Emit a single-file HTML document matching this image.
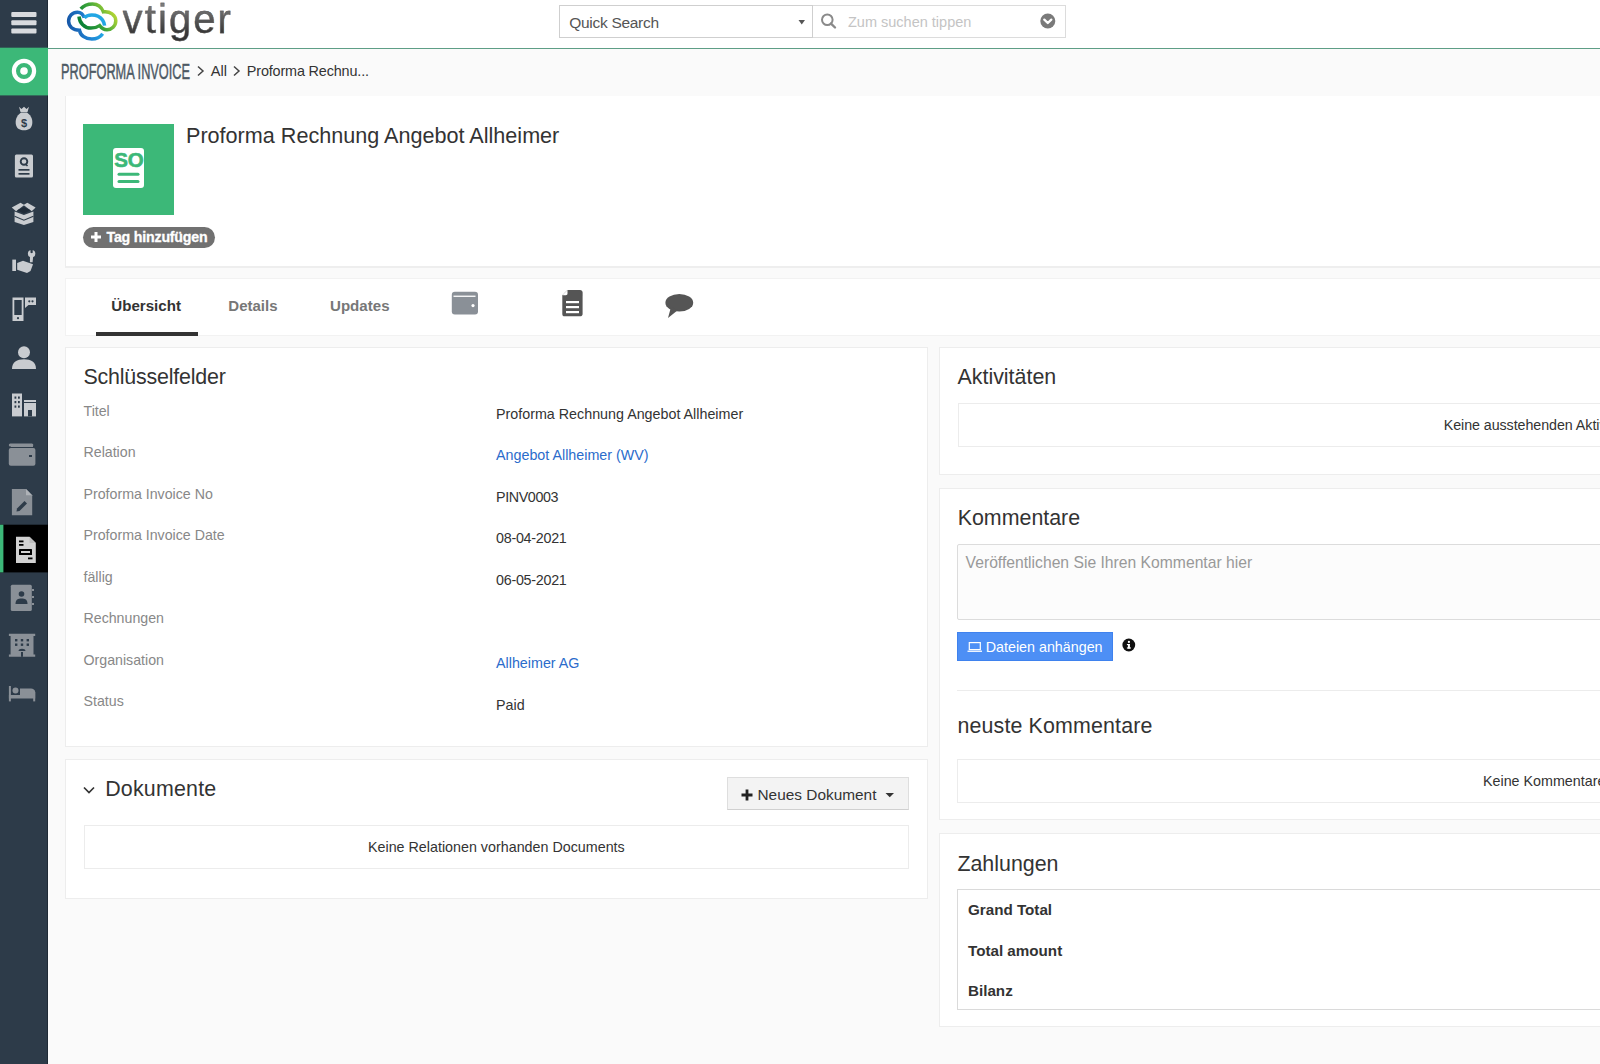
<!DOCTYPE html>
<html>
<head>
<meta charset="utf-8">
<style>
*{box-sizing:border-box;margin:0;padding:0}
html,body{width:1600px;height:1064px;overflow:hidden}
body{background:#fafafa;font-family:"Liberation Sans",sans-serif;color:#333;position:relative}
.abs{position:absolute}
#side{left:0;top:0;width:48px;height:1064px;background:#2d3b49;border-right:1px solid #1f2a36}
#hdr{left:48px;top:0;width:1552px;height:49px;background:#fff;border-bottom:1px solid #5e9e86}
#crumb{left:48px;top:49px;width:1552px;height:47px;background:#fafafa}
.card{position:absolute;background:#fff;border:1px solid #ededed}
.b{position:absolute;white-space:nowrap;line-height:1;transform:translateY(-84.67%)}
.lbl{color:#888;font-size:14.2px;left:83.5px}
.val{color:#333;font-size:14.3px;left:496px}
.lnk{color:#2b6ccb}
.h2{font-size:21.4px;color:#333}
</style>
</head>
<body>
<div id="side" class="abs">
<svg width="48" height="1064" viewBox="0 0 48 1064" style="position:absolute;left:0;top:0">
  <!-- hamburger -->
  <g fill="#d8dade">
    <rect x="11.3" y="12" width="25.2" height="5" rx="1"/>
    <rect x="11.3" y="20.3" width="25.2" height="5" rx="1"/>
    <rect x="11.3" y="28.4" width="25.2" height="5" rx="1"/>
  </g>
  <!-- green active home -->
  <rect x="0" y="47.7" width="48" height="47.7" fill="#3cb878"/>
  <circle cx="24" cy="71" r="10.1" fill="none" stroke="#fff" stroke-width="4.2"/>
  <circle cx="24" cy="71" r="3.8" fill="#fff"/>
  <!-- money bag -->
  <g fill="#c9ccd0">
    <path d="M19 106.7 L21.5 109 L24 106.7 L26.5 109 L29 106.7 L27.5 112 L20.5 112 Z"/>
    <path d="M21 112.5 L27 112.5 C32 116 33 121 32 125 C31 129 28 130.2 24 130.2 C20 130.2 17 129 16 125 C15 121 16 116 21 112.5 Z"/>
  </g>
  <text x="24" y="126.5" font-family="Liberation Sans" font-weight="bold" font-size="11" fill="#2d3b49" text-anchor="middle">$</text>
  <!-- quotes -->
  <rect x="14.9" y="154.6" width="18.1" height="23" rx="1.5" fill="#c9ccd0"/>
  <circle cx="24" cy="161.5" r="3.3" fill="none" stroke="#2d3b49" stroke-width="1.9"/>
  <path d="M25.5 164 L27.5 166" stroke="#2d3b49" stroke-width="1.6"/>
  <rect x="18.5" y="169" width="11" height="1.7" fill="#2d3b49"/>
  <rect x="18.5" y="173" width="11" height="1.7" fill="#2d3b49"/>
  <!-- box -->
  <g fill="#c9ccd0">
    <path d="M11.75 207.5 L20.5 202.8 L24.3 204.9 L16.1 211.2 Z"/>
    <path d="M35.6 207.5 L27.3 202.8 L23.5 204.9 L31.7 211.2 Z"/>
    <path d="M14.6 211.6 L23.9 215 L33.4 211.6 V222 L23.9 225.1 L14.6 222 Z"/>
  </g>
  <path d="M17 210.3 L23.9 207.3 L30.8 210.3 L23.9 213.6 Z" fill="#1f2b38"/>
  <path d="M14.6 216.3 L23.9 220.2 L33.4 216.3" fill="none" stroke="#2d3b49" stroke-width="1.2"/>
  <!-- hand with wrench -->
  <g fill="#c9ccd0">
    <rect x="12.3" y="259.6" width="3.7" height="11.4"/>
    <path d="M17.2 263 L23 260.8 L33 264.3 L30.5 271 L27 273 L17.2 269.7 Z"/>
    <circle cx="31.6" cy="253.6" r="3.7"/>
    <path d="M30 256 H33.2 L32.6 262.3 H29.9 Z"/>
  </g>
  <path d="M30.5 249.5 H32.7 V252.6 C32.7 253.3 30.5 253.3 30.5 252.6 Z" fill="#2d3b49"/>
  <!-- phone + chat -->
  <g fill="#c9ccd0">
    <path d="M12.5 297.5 H23.5 V321 H12.5 Z M14.3 300 V315 H21.7 V300 Z"/>
    <circle cx="18" cy="318.2" r="1.1" fill="#2d3b49"/>
    <path d="M25 297.4 H36 V305 H28.5 L25 308 Z"/>
  </g>
  <circle cx="29.3" cy="301.3" r="1.1" fill="#2d3b49"/>
  <circle cx="32.5" cy="301.3" r="1.1" fill="#2d3b49"/>
  <!-- person -->
  <g fill="#c9ccd0">
    <circle cx="24" cy="352.2" r="6"/>
    <path d="M12 369 C12 362 17 359.2 24 359.2 C31 359.2 36 362 36 369 Z"/>
  </g>
  <!-- buildings -->
  <g fill="#c9ccd0">
    <rect x="12" y="393.5" width="10" height="22.9"/>
    <rect x="24" y="400" width="12" height="16.4"/>
  </g>
  <g fill="#2d3b49">
    <rect x="14.5" y="396.5" width="1.8" height="2.2"/><rect x="18" y="396.5" width="1.8" height="2.2"/>
    <rect x="14.5" y="401" width="1.8" height="2.2"/><rect x="18" y="401" width="1.8" height="2.2"/>
    <rect x="14.5" y="405.5" width="1.8" height="2.2"/><rect x="18" y="405.5" width="1.8" height="2.2"/>
    <rect x="24" y="402" width="12" height="1"/>
    <rect x="28" y="410" width="4" height="6.4"/>
  </g>
  <!-- wallet -->
  <path d="M11 445.5 H33 V447 H11 Z" fill="#8a9097"/>
  <rect x="8.8" y="448" width="26.6" height="17.8" rx="2" fill="#8a9097"/>
  <rect x="8.8" y="443.5" width="24.5" height="3" rx="1.5" fill="#8a9097"/>
  <rect x="29" y="455" width="3" height="2" fill="#2d3b49"/>
  <!-- doc edit -->
  <path d="M11.9 489 H26 L32.2 495.2 V515.2 H11.9 Z" fill="#8a9097"/>
  <path d="M26 489 V495.2 H32.2 Z" fill="#aeb2b7"/>
  <path d="M17 508.5 L24.5 501 L27 503.5 L19.5 511 L16.5 511.5 Z" fill="#2d3b49"/>
  <!-- active proforma -->
  <rect x="0" y="524.7" width="48" height="47.7" fill="#000"/>
  <rect x="0" y="524.7" width="3.4" height="47.7" fill="#3cb878"/>
  <path d="M16 536.8 H29.5 L35.8 543 V563 H16 Z" fill="#d2d2d2"/>
  <path d="M29.5 536.8 V543 H35.8 Z" fill="#bdbdbd"/>
  <g fill="#000">
    <rect x="19" y="540.5" width="4.5" height="1.8"/>
    <rect x="19" y="544" width="4.5" height="1.8"/>
    <rect x="19" y="549" width="13" height="6" rx="0.5"/>
    <rect x="28" y="557.5" width="4.5" height="1.8"/>
  </g>
  <rect x="21" y="551" width="9" height="2" fill="#d2d2d2"/>
  <!-- contacts book -->
  <rect x="10.8" y="584.8" width="21" height="26.3" rx="1.5" fill="#8a9097"/>
  <g fill="#8a9097"><rect x="32" y="589" width="2" height="2"/><rect x="32" y="596" width="2" height="2"/><rect x="32" y="603" width="2" height="2"/></g>
  <g fill="#2d3b49">
    <circle cx="21.5" cy="594" r="2.8"/>
    <path d="M15.5 604 C15.5 599.5 18 598.5 21.5 598.5 C25 598.5 27.5 599.5 27.5 604 Z"/>
  </g>
  <!-- building -->
  <path d="M8.9 633.8 H35.2 V636 H33.5 V654.5 H35.2 V656.8 H8.9 V654.5 H10.6 V636 H8.9 Z" fill="#8a9097"/>
  <g fill="#2d3b49">
    <rect x="15" y="639" width="2.4" height="2.4"/><rect x="20.8" y="639" width="2.4" height="2.4"/><rect x="26.6" y="639" width="2.4" height="2.4"/>
    <rect x="15" y="643.5" width="2.4" height="2.4"/><rect x="20.8" y="643.5" width="2.4" height="2.4"/><rect x="26.6" y="643.5" width="2.4" height="2.4"/>
    <path d="M18.5 651 C18.5 648 25.5 648 25.5 651 Z"/>
    <rect x="21" y="652" width="2" height="4.8"/>
  </g>
  <!-- bed -->
  <g fill="#8a9097">
    <rect x="8.9" y="686" width="2" height="15.4"/>
    <rect x="8.9" y="695" width="26.3" height="3.5"/>
    <rect x="33.2" y="692" width="2" height="9.4"/>
    <path d="M20 688.5 H31 C33 688.5 35.2 690 35.2 692 V695 H20 Z"/>
    <circle cx="15.5" cy="690.5" r="3"/>
  </g>
</svg>
</div>
<div id="hdr" class="abs"></div>
<div id="crumb" class="abs"></div>
<!-- logo -->
<svg class="abs" style="left:60px;top:0" width="62" height="46" viewBox="60 0 62 46">
  <defs>
    <linearGradient id="gb" gradientUnits="userSpaceOnUse" x1="68" y1="25" x2="105" y2="20"><stop offset="0" stop-color="#1758a8"/><stop offset="0.5" stop-color="#1f7fd0"/><stop offset="1" stop-color="#25b0ea"/></linearGradient>
    <linearGradient id="gg" gradientUnits="userSpaceOnUse" x1="85" y1="28" x2="112" y2="10"><stop offset="0" stop-color="#0a8236"/><stop offset="0.5" stop-color="#3ea53a"/><stop offset="1" stop-color="#b4d635"/></linearGradient>
  </defs>
  <path d="M84.3 17.8 C83 14 81 12.2 77.5 12.2 C72.5 12.2 68.6 16 68.6 21.1 C68.6 26.5 73 30.3 79.5 30.3 C80.5 35.5 85.5 39.1 91.8 39.1 C96.5 39.1 100.5 36.8 102.7 33.7" fill="none" stroke="url(#gb)" stroke-width="3.5"/>
  <path d="M84.3 17.8 C86 15.8 88.5 14.9 91.8 14.9 C96.5 14.9 100.5 17 102.5 20 C103.8 22 104.4 23.8 104.6 25.6" fill="none" stroke="#22a6e4" stroke-width="3.5"/>
  <path d="M80.8 8.9 C83.5 5.5 87.5 3.9 92.6 3.9 C97.5 3.9 101.5 7 103.4 11.8 C110 11 115.8 15 115.8 20.7 C115.8 26 111.5 29.8 107 29.8 C104 29.8 101.3 28 99.6 25.6 C97 27.3 94.2 28.1 90.9 28.1 C84.5 28.1 79.5 23 79 16.5" fill="none" stroke="url(#gg)" stroke-width="3.5"/>
</svg>
<div class="abs" style="left:122.6px;top:-1.47px;font-size:40px;line-height:40px;padding-bottom:10px;white-space:nowrap;letter-spacing:2.1px;background:linear-gradient(#8a8a8a,#3a3a3a 65%,#2a2a2a);-webkit-background-clip:text;background-clip:text;color:transparent;-webkit-text-stroke:0.3px #555">vtiger</div>
<!-- quick search -->
<div class="abs" style="left:559px;top:5px;width:254px;height:33px;border:1px solid #cfcfcf;background:#fff"></div>
<div class="b" style="left:569.3px;top:28px;font-size:15.5px;letter-spacing:-0.3px;color:#555">Quick Search</div>
<svg class="abs" style="left:797px;top:18px" width="10" height="8"><path d="M1.5 2 H8 L4.75 6.5 Z" fill="#555"/></svg>
<div class="abs" style="left:813px;top:5px;width:253px;height:33px;border:1px solid #dcdcdc;border-left:0;background:#fff"></div>
<svg class="abs" style="left:818px;top:11px" width="20" height="20">
  <circle cx="9.3" cy="8.8" r="5.3" fill="none" stroke="#8a8a8a" stroke-width="2"/>
  <path d="M13 12.6 L17 16.5" stroke="#8a8a8a" stroke-width="2.4" stroke-linecap="round"/>
</svg>
<div class="b" style="left:848px;top:27px;font-size:14.5px;color:#c4c4c4">Zum suchen tippen</div>
<svg class="abs" style="left:1038px;top:12px" width="20" height="20">
  <circle cx="9.8" cy="9" r="7.5" fill="#7a7a7a"/>
  <path d="M6.3 7.6 L9.8 11 L13.3 7.6" fill="none" stroke="#fff" stroke-width="2.3" stroke-linecap="round" stroke-linejoin="round"/>
</svg>
<!-- breadcrumb -->
<div class="b" style="left:60.8px;top:79.7px;font-size:22.4px;color:#4d5964;-webkit-text-stroke:0.5px #4d5964;transform:translateY(-84.67%) scaleX(0.57);transform-origin:0 0">PROFORMA INVOICE</div>
<svg class="abs" style="left:195px;top:64px" width="12" height="14"><path d="M3 2.5 L8 7 L3 11.5" fill="none" stroke="#444" stroke-width="1.5"/></svg>
<div class="b" style="left:210.7px;top:76.2px;font-size:14.6px;color:#333">All</div>
<svg class="abs" style="left:231px;top:64px" width="12" height="14"><path d="M3 2.5 L8 7 L3 11.5" fill="none" stroke="#444" stroke-width="1.5"/></svg>
<div class="b" style="left:246.8px;top:76.2px;font-size:14.4px;letter-spacing:-0.15px;color:#333">Proforma Rechnu...</div>

<!-- header card -->
<div class="card" style="left:65px;top:96px;width:1545px;height:172px;border-top:0;border-bottom:2px solid #eeeeee"></div>
<!-- tabs -->
<div class="card" style="left:65px;top:278px;width:1545px;height:58px;border-color:#f2f2f2"></div>
<!-- left panels -->
<div class="card" style="left:65px;top:347px;width:863px;height:400px"></div>
<div class="card" style="left:65px;top:759px;width:863px;height:140px"></div>
<!-- right panels -->
<div class="card" style="left:939px;top:347px;width:700px;height:128px"></div>
<div class="card" style="left:939px;top:488px;width:700px;height:332px"></div>
<div class="card" style="left:939px;top:833px;width:700px;height:194px"></div>
<!-- record header -->
<div class="abs" style="left:83px;top:124px;width:91px;height:91px;background:#3cb878"></div>
<svg class="abs" style="left:110px;top:145px" width="38" height="46" viewBox="110 145 38 46">
  <rect x="113" y="148" width="31" height="40" rx="3" fill="#fff"/>
  <text x="128.8" y="166.5" font-family="Liberation Sans" font-weight="bold" font-size="20.5" fill="#3cb878" stroke="#3cb878" stroke-width="0.6" text-anchor="middle" letter-spacing="-0.3">SO</text>
  <rect x="117.5" y="172.8" width="22" height="3" rx="1.5" fill="#3cb878"/>
  <rect x="117.5" y="180" width="22" height="3" rx="1.5" fill="#3cb878"/>
</svg>
<div class="b" style="left:186px;top:143.2px;font-size:21.6px;color:#333">Proforma Rechnung Angebot Allheimer</div>
<div class="abs" style="left:83px;top:226.5px;width:132px;height:21.5px;border-radius:11px;background:#717171"></div>
<svg class="abs" style="left:89px;top:230px" width="14" height="14"><path d="M2 7 H12 M7 2 V12" stroke="#fff" stroke-width="3"/></svg>
<div class="b" style="left:106.5px;top:241.9px;font-size:14.2px;font-weight:bold;letter-spacing:-0.2px;color:#fff;-webkit-text-stroke:0.3px #fff">Tag hinzufügen</div>

<!-- tabs -->
<div class="b" style="left:111.3px;top:310.6px;font-size:15.1px;font-weight:bold;color:#333">Übersicht</div>
<div class="b" style="left:228.3px;top:310.6px;font-size:15px;font-weight:bold;color:#777">Details</div>
<div class="b" style="left:330px;top:310.6px;font-size:15.1px;font-weight:bold;color:#777">Updates</div>
<div class="abs" style="left:95.5px;top:332px;width:102.5px;height:3.6px;background:#333"></div>
<svg class="abs" style="left:448px;top:288px" width="34" height="30" viewBox="448 288 34 30">
  <rect x="451.8" y="291.8" width="26.2" height="22.8" rx="3" fill="#8a9097"/>
  <rect x="453.5" y="295.6" width="22" height="1.3" fill="#fff"/>
  <circle cx="473" cy="305.6" r="1.6" fill="#fff"/>
</svg>
<svg class="abs" style="left:558px;top:286px" width="30" height="34" viewBox="558 286 30 34">
  <path d="M567.5 290 H580 C581.5 290 582.6 291 582.6 292.5 V314 C582.6 315.5 581.5 316.3 580 316.3 H564.5 C563 316.3 562.3 315.5 562.3 314 V295.2 Z" fill="#555"/>
  <path d="M562.3 295.2 L567.5 290 V293.5 C567.5 294.5 566.8 295.2 565.8 295.2 Z" fill="#fff"/>
  <rect x="566" y="301" width="13" height="2.2" fill="#fff"/>
  <rect x="566" y="306" width="13" height="2.2" fill="#fff"/>
  <rect x="566" y="311" width="13" height="2.2" fill="#fff"/>
</svg>
<svg class="abs" style="left:662px;top:290px" width="34" height="32" viewBox="662 290 34 32">
  <ellipse cx="679.3" cy="302.8" rx="13.9" ry="8.8" fill="#555"/>
  <path d="M671 307 L668 318 L678 310 Z" fill="#555"/>
</svg>

<!-- Schluesselfelder -->
<div class="b h2" style="left:83.4px;top:384.7px;letter-spacing:-0.18px">Schlüsselfelder</div>
<div class="b lbl" style="top:415.7px">Titel</div>
<div class="b lbl" style="top:457.2px">Relation</div>
<div class="b lbl" style="top:498.7px">Proforma Invoice No</div>
<div class="b lbl" style="top:540.2px">Proforma Invoice Date</div>
<div class="b lbl" style="top:581.7px">fällig</div>
<div class="b lbl" style="top:623.2px">Rechnungen</div>
<div class="b lbl" style="top:664.7px">Organisation</div>
<div class="b lbl" style="top:706.2px">Status</div>
<div class="b val" style="top:419.4px">Proforma Rechnung Angebot Allheimer</div>
<div class="b val lnk" style="top:460.3px">Angebot Allheimer (WV)</div>
<div class="b val" style="top:501.9px;letter-spacing:-0.38px">PINV0003</div>
<div class="b val" style="top:543.4px;letter-spacing:-0.26px">08-04-2021</div>
<div class="b val" style="top:585px;letter-spacing:-0.26px">06-05-2021</div>
<div class="b val lnk" style="top:668px">Allheimer AG</div>
<div class="b val" style="top:709.6px">Paid</div>

<!-- Dokumente -->
<svg class="abs" style="left:81px;top:784px" width="16" height="12"><path d="M3 3.5 L8 8.5 L13 3.5" fill="none" stroke="#333" stroke-width="1.7"/></svg>
<div class="b h2" style="left:105.2px;top:796.7px;letter-spacing:0.2px">Dokumente</div>
<div class="abs" style="left:727px;top:777.4px;width:182px;height:33px;background:#f3f3f3;border:1px solid #dedede;border-bottom-color:#d0d0d0"></div>
<svg class="abs" style="left:740px;top:787.5px" width="14" height="14"><path d="M1.5 7 H12.5 M7 1.5 V12.5" stroke="#222" stroke-width="2.8"/></svg>
<div class="b" style="left:757.5px;top:799.5px;font-size:15.4px;color:#333">Neues Dokument</div>
<svg class="abs" style="left:884px;top:791px" width="12" height="8"><path d="M1.5 2 H10 L5.75 6.2 Z" fill="#333"/></svg>
<div class="abs" style="left:84px;top:824.7px;width:825px;height:44.5px;border:1px solid #ececec;background:#fff"></div>
<div class="b" style="left:368px;top:852px;font-size:14.3px;color:#333">Keine Relationen vorhanden Documents</div>

<!-- Aktivitaeten -->
<div class="b h2" style="left:957.5px;top:384.7px">Aktivitäten</div>
<div class="abs" style="left:957.5px;top:402.5px;width:700px;height:44px;border:1px solid #ececec;background:#fff"></div>
<div class="b" style="left:1443.7px;top:430px;font-size:14.25px;letter-spacing:-0.05px;color:#333">Keine ausstehenden Aktivitäten</div>

<!-- Kommentare -->
<div class="b h2" style="left:957.7px;top:525.7px">Kommentare</div>
<div class="abs" style="left:957px;top:544px;width:700px;height:75.5px;border:1px solid #dcdcdc;background:#fcfcfc;border-radius:2px"></div>
<div class="b" style="left:965.6px;top:567.7px;font-size:15.7px;color:#999">Veröffentlichen Sie Ihren Kommentar hier</div>
<div class="abs" style="left:957px;top:631.6px;width:156px;height:29px;background:#4d8ff5;border:1px solid #3f82ee"></div>
<svg class="abs" style="left:966px;top:639px" width="18" height="14">
  <rect x="3.3" y="3.6" width="11" height="7" fill="none" stroke="#fff" stroke-width="1.2"/>
  <rect x="1.5" y="11.6" width="14.5" height="1.3" fill="#fff"/>
</svg>
<div class="b" style="left:985.7px;top:651.5px;font-size:14.3px;color:#fff">Dateien anhängen</div>
<svg class="abs" style="left:1121px;top:637px" width="16" height="16">
  <circle cx="7.8" cy="8" r="6.4" fill="#111"/>
  <rect x="6.9" y="7" width="2" height="4.6" fill="#fff"/>
  <rect x="5.9" y="10.4" width="4" height="1.2" fill="#fff"/>
  <rect x="5.9" y="7" width="3" height="1.1" fill="#fff"/>
  <circle cx="7.9" cy="4.9" r="1.1" fill="#fff"/>
</svg>
<div class="abs" style="left:957px;top:690px;width:650px;height:1px;background:#ececec"></div>
<div class="b h2" style="left:957.4px;top:733.7px;letter-spacing:0.15px">neuste Kommentare</div>
<div class="abs" style="left:957.4px;top:759.3px;width:700px;height:44px;border:1px solid #ececec;background:#fff"></div>
<div class="b" style="left:1483px;top:785.6px;font-size:14.3px;color:#333">Keine Kommentare</div>

<!-- Zahlungen -->
<div class="b h2" style="left:957.4px;top:871.5px">Zahlungen</div>
<div class="abs" style="left:957.4px;top:888.7px;width:700px;height:121.3px;border:1px solid #dadada;background:#fff"></div>
<div class="b" style="left:968px;top:915px;font-size:15.2px;font-weight:bold;color:#333">Grand Total</div>
<div class="b" style="left:968px;top:955.5px;font-size:15.2px;font-weight:bold;color:#333">Total amount</div>
<div class="b" style="left:968px;top:996px;font-size:15.2px;font-weight:bold;color:#333">Bilanz</div>
</body>
</html>
